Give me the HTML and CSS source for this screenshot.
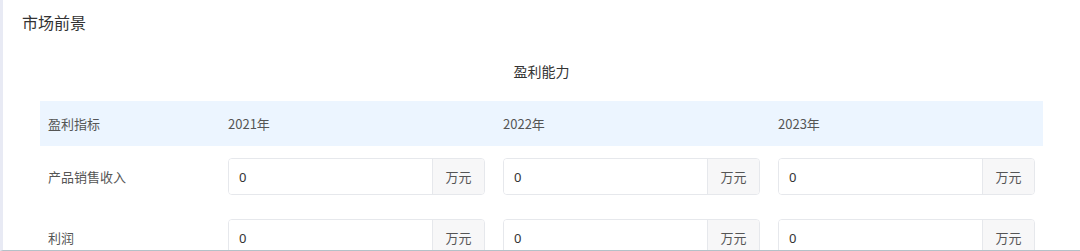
FILE: index.html
```html
<!DOCTYPE html>
<html lang="zh">
<head>
<meta charset="utf-8">
<link rel="stylesheet" href="styles.css">
</head>
<body>
<div class="page">
  <div class="card">
    <h2 class="title">市场前景</h2>
    <h3 class="subtitle">盈利能力</h3>
    <div class="table">
      <div class="row head">
        <div class="label">盈利指标</div>
        <div class="col">2021年</div>
        <div class="col">2022年</div>
        <div class="col">2023年</div>
      </div>
      <div class="row">
        <div class="label">产品销售收入</div>
        <div class="group"><input class="inp" value="0"><span class="suffix">万元</span></div>
        <div class="group"><input class="inp" value="0"><span class="suffix">万元</span></div>
        <div class="group"><input class="inp" value="0"><span class="suffix">万元</span></div>
      </div>
      <div class="row">
        <div class="label">利润</div>
        <div class="group"><input class="inp" value="0"><span class="suffix">万元</span></div>
        <div class="group"><input class="inp" value="0"><span class="suffix">万元</span></div>
        <div class="group"><input class="inp" value="0"><span class="suffix">万元</span></div>
      </div>
    </div>
  </div>
</div>
</body>
</html>
```
FILE: styles.css
```css
* { box-sizing: border-box; }
html, body { margin: 0; padding: 0; background: #fff; }
body { font-family: "Noto Sans CJK SC", "Noto Sans", sans-serif; color: #333; }
.page {
  height: 251px;
  overflow: hidden;
  border-left: 3px solid #e8eaf4;
  border-bottom: 1px solid #b5c1c8;
}
.card { padding: 10px 37px 0 37px; }
.title {
  margin: 0 0 0 -18px;
  font-size: 16px;
  font-weight: normal;
  line-height: 24px;
  color: #333;
}
.subtitle {
  margin: 27px 0 0;
  text-align: center;
  font-size: 14px;
  font-weight: normal;
  line-height: 20px;
  color: #333;
}
.table { margin-top: 20px; width: 1003px; }
.row {
  display: grid;
  grid-template-columns: 162px 257px 257px 257px;
  column-gap: 18px;
  align-items: center;
  padding: 12px 8px 12px 8px;
  font-size: 13px;
  color: #555;
}
.row.head {
  background: #ecf5ff;
  height: 45px;
  padding: 0 8px;
}
.label { color: #555; }
.group {
  display: flex;
  height: 37px;
  border: 1px solid #e6e8ec;
  border-radius: 4px;
  overflow: hidden;
}
.inp {
  flex: 1;
  min-width: 0;
  border: 0;
  outline: none;
  padding: 0 10px;
  font: 13px "Noto Sans", sans-serif;
  color: #333;
  background: #fff;
}
.suffix {
  width: 52px;
  display: flex;
  align-items: center;
  justify-content: center;
  background: #f7f7f8;
  border-left: 1px solid #e6e8ec;
  color: #555;
  font-size: 13px;
}
```
